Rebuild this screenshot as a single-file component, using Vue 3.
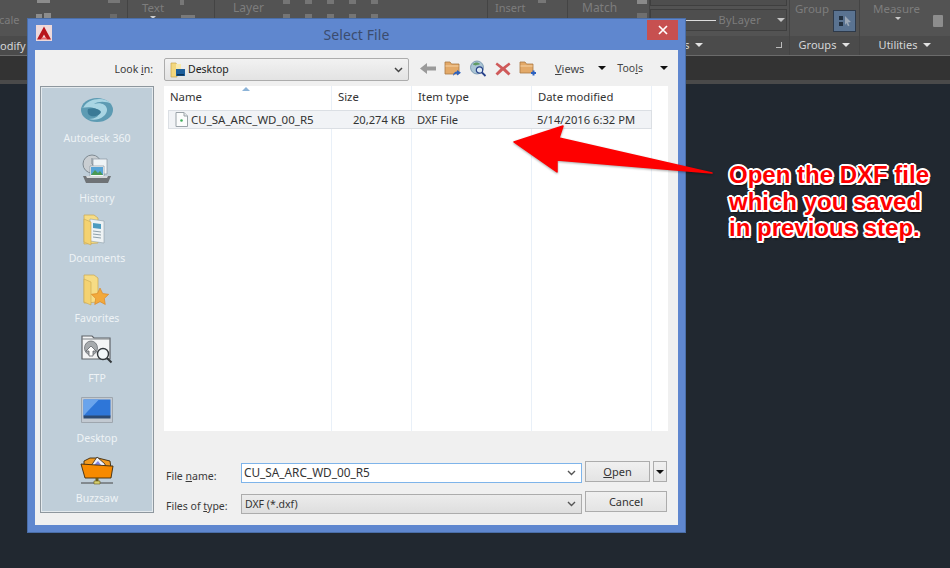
<template>
  <div class="screen">
    <div class="ribbon">
      <div class="panels">
        <div class="panel p-modify">
          <div class="panel-body">
            <span class="dim cale">cale</span>
            <i class="sq sq-a"></i><i class="sq sq-b"></i><i class="sq sq-c"></i>
            <i class="sq sq-d"></i><i class="sq sq-e"></i>
          </div>
          <div class="panel-foot"><span class="foot-left">odify</span></div>
        </div>
        <div class="panel p-text">
          <div class="panel-body">
            <span class="dim">Text</span>
            <i class="sq sq-pen"></i><i class="sq sq-table"></i>
            <i class="tri tri-small tri-text"></i>
          </div>
          <div class="panel-foot"></div>
        </div>
        <div class="panel p-layer">
          <div class="panel-body">
            <span class="dim">Layer</span>
            <div class="mini-row mini-top">
              <i v-for="n in 5" :key="n" class="mini"></i>
            </div>
            <div class="mini-row mini-low">
              <i v-for="n in 5" :key="n" class="mini"></i>
            </div>
          </div>
          <div class="panel-foot"></div>
        </div>
        <div class="panel p-insert">
          <div class="panel-body">
            <span class="dim">Insert</span>
            <i class="sq sq-ins"></i>
          </div>
          <div class="panel-foot"></div>
        </div>
        <div class="panel p-match">
          <div class="panel-body">
            <span class="dim">Match</span>
            <i class="sq sq-m1"></i><i class="sq sq-m2"></i>
          </div>
          <div class="panel-foot"></div>
        </div>
        <div class="panel p-props">
          <div class="panel-body">
            <div class="prop-box prop-top"></div>
            <div class="prop-box prop-bylayer">
              <span class="prop-line"></span>
              <span class="dim">ByLayer</span>
              <i class="tri tri-soft"></i>
            </div>
          </div>
          <div class="panel-foot props-foot">
            <span>es</span><i class="tri"></i>
            <i class="launcher"></i>
          </div>
        </div>
        <div class="panel p-groups">
          <div class="panel-body">
            <span class="dim">Group</span>
            <span class="group-btn">
              <svg width="16" height="16" viewBox="0 0 16 16"><path d="M2 3h4v4H2zM2 9h4v4H2z" fill="#22303f"/><path d="M8 3l6 6-3 .5 1.500 3-1.500 .8L9.500 10 8 12z" fill="#9aa6b5"/></svg>
            </span>
          </div>
          <div class="panel-foot"><span>Groups</span><i class="tri"></i></div>
        </div>
        <div class="panel p-util">
          <div class="panel-body">
            <span class="dim">Measure</span>
            <i class="tri tri-small"></i>
            <i class="calc"></i>
          </div>
          <div class="panel-foot"><span>Utilities</span><i class="tri"></i></div>
        </div>
      </div>
      <div class="tab-strip"></div>
      <div class="tab-edge"></div>
    </div>

    <div class="dialog">
      <div class="titlebar">
        <span class="app-icon">
          <svg width="16" height="16" viewBox="0 0 16 16"><path d="M8 1.500 15 14.500h-4.200L8 9.500 5.200 14.500H1z" fill="#b8141c"/><path d="M5 14.500h6l-1-2H6z" fill="#e8666a"/></svg>
        </span>
        <span class="title">Select File</span>
        <button class="close">
          <svg width="10" height="10" viewBox="0 0 10 10"><path d="M1 1l8 8M9 1l-8 8" stroke="#fff" stroke-width="1.700"/></svg>
        </button>
      </div>

      <div class="dialog-body">
        <label class="look-label">Look <u>i</u>n:</label>
        <div class="look-row">
          <div class="look-combo">
            <svg width="16" height="17" viewBox="0 0 16 17"><path d="M1 2h5l1 2v12H1z" fill="#f3d77e" stroke="#c9a84f" stroke-width=".7"/><path d="M6 3h5v7H6z" fill="#f8e9ae"/><path d="M6 8h9v7H6z" fill="#1d5f9c"/><path d="M7 13h7v1.500H7z" fill="#0f3558"/></svg>
            <span>Desktop</span>
            <svg class="chev" width="9" height="6" viewBox="0 0 9 6"><path d="M1 1l3.500 3.500L8 1" fill="none" stroke="#444" stroke-width="1.500"/></svg>
          </div>
          <div class="tools">
            <svg class="tool" width="18" height="17" viewBox="0 0 18 17"><path d="M1 8.500 8 3v3.500h9v4H8V14z" fill="#9a9a9a"/></svg>
            <svg class="tool" width="18" height="17" viewBox="0 0 18 17"><path d="M1 2h5l1.500 2H15v10H1z" fill="#e3a968" stroke="#a97a45" stroke-width=".8"/><path d="M1.500 6h13" stroke="#f6d3a6"/><path d="M9 16c0-3 2-4.500 4-4.500V10l4 2.800-4 2.700v-1.700c-1.500 0-3 .5-4 2.200z" fill="#2d62c0"/></svg>
            <svg class="tool" width="18" height="17" viewBox="0 0 18 17"><circle cx="8" cy="7.500" r="6.500" fill="#a9c4d4" stroke="#6d8ea8" stroke-width=".8"/><path d="M4 4c2-2 5-2 7 0-1 1-2 .5-3 1S5 6 4 4z" fill="#5f9a63"/><circle cx="10.500" cy="10" r="3.200" fill="#dce9f2" stroke="#28428a" stroke-width="1.200"/><path d="M13 12.500l3.500 3.500" stroke="#28428a" stroke-width="1.800"/></svg>
            <svg class="tool" width="18" height="17" viewBox="0 0 18 17"><path d="M3 2.500 9 7l6-4.500 1.500 2L11.500 8.500l5 5-2 2L9 10.500l-5.500 5-2-2 5-5-5-4z" fill="#cf5a5a"/></svg>
            <svg class="tool" width="18" height="17" viewBox="0 0 18 17"><path d="M1 2h5l1.500 2H14v9H1z" fill="#e3a968" stroke="#a97a45" stroke-width=".8"/><path d="M1.500 6h12" stroke="#f6d3a6"/><path d="M12 13h5M14.500 10.500v5" stroke="#2d62c0" stroke-width="2"/></svg>
            <span class="tool-text views"><u>V</u>iews</span><i class="tri tri-black"></i>
            <span class="tool-text tool-name">Too<u>l</u>s</span><i class="tri tri-black"></i>
          </div>
        </div>

        <nav class="places">
          <div class="place">
            <svg width="34" height="28" viewBox="0 0 34 28"><ellipse cx="17" cy="14" rx="16" ry="12" fill="#5d9bb3"/><path d="M3 12C8 2 24 0 32 8c-6-3-14-3-18 0 6-2 12 0 13 5 1 7-10 13-18 10 6 0 11-3 10-7-2-4-8-6-18-4z" fill="#a9d5e3"/><path d="M8 13c5-2 12 0 13 3-1 3-6 5-10 4-3-1-4-4-3-7z" fill="#3b7a96"/></svg>
            <span>Autodesk 360</span>
          </div>
          <div class="place">
            <svg width="32" height="32" viewBox="0 0 32 32"><circle cx="11" cy="10" r="9" fill="#c9ced2" stroke="#7f8a92"/><path d="M11 4v6l4 3" stroke="#7f8a92" fill="none"/><path d="M12 5h14v15H12z" fill="#eef3f6" stroke="#8b97a0" stroke-width=".7"/><path d="M9 12h14v11H9z" fill="#f7fafb" stroke="#8b97a0" stroke-width=".7"/><path d="M10 13h12v8H10z" fill="#58a4d6"/><path d="M10 21l4-5 3 3 2-2 3 4z" fill="#4b9a54"/><path d="M2 22h28l-3 7H5z" fill="#6f7376"/><path d="M5 22h22l-1 2H6z" fill="#d5d8da"/></svg>
            <span>History</span>
          </div>
          <div class="place shifted">
            <svg width="32" height="34" viewBox="0 0 32 34"><path d="M5 2h10l4 3v25l-14 1z" fill="#f6dc85" stroke="#c9a752" stroke-width=".7"/><path d="M11 6l14 2v22l-14-2z" fill="#eef3f5" stroke="#8ea0aa" stroke-width=".6"/><path d="M14 10l8 1v5l-8-1z" fill="#4d9cc0"/><path d="M14 18l8 1M14 21l8 1M14 24l8 1" stroke="#8ea0aa"/><path d="M5 6l7 3v23l-7-3z" fill="#f4d271" stroke="#c9a752" stroke-width=".6"/></svg>
            <span>Documents</span>
          </div>
          <div class="place shifted">
            <svg width="32" height="34" viewBox="0 0 32 34"><path d="M5 2h10l4 3v24L5 30z" fill="#f6dc85" stroke="#c9a752" stroke-width=".7"/><path d="M5 6l7 3v23l-7-3z" fill="#f4d271" stroke="#c9a752" stroke-width=".6"/><path d="M21 15l2.700 5.500 6 .8-4.400 4.200 1 6-5.300-2.800-5.300 2.800 1-6-4.300-4.200 6-.8z" fill="#f2a93b" stroke="#d97f1d" stroke-width=".6"/></svg>
            <span>Favorites</span>
          </div>
          <div class="place">
            <svg width="32" height="32" viewBox="0 0 32 32"><path d="M1 2h10l2 2h16v21H1z" fill="#f3f4f5" stroke="#5f6368" stroke-width="1.200"/><path d="M1 5h28" stroke="#7f8488"/><ellipse cx="10" cy="14" rx="6.500" ry="7" fill="#a6aaad" stroke="#5f6368" stroke-width=".7"/><path d="M10 12l5 5h-3v5H8v-5H5z" fill="#fff" stroke="#5f6368" stroke-width=".8"/><circle cx="22" cy="20" r="5.500" fill="#f3f7fa" stroke="#33383c" stroke-width="1.400"/><path d="M26 24l4.500 4.500" stroke="#33383c" stroke-width="2"/></svg>
            <span>FTP</span>
          </div>
          <div class="place">
            <svg width="32" height="26" viewBox="0 0 32 26"><path d="M.5.500h31v25H.5z" fill="#c2c9d1" stroke="#9ea6ae"/><path d="M2.500 2.500h27v17h-27z" fill="#2e76d8"/><path d="M2.500 2.500H18L6 15 2.500 19z" fill="#6aa4ec"/><path d="M2.500 18.500h27v3h-27z" fill="#2c4a72"/></svg>
            <span>Desktop</span>
          </div>
          <div class="place">
            <svg width="34" height="32" viewBox="0 0 34 32"><path d="M4 7l6-3 8 0 12 3 1 7H4z" fill="#f39a1e" stroke="#3c2a10" stroke-width=".9"/><path d="M11 12l6-9 8 7v4H11z" fill="#eef0fa" stroke="#3c2a10" stroke-width=".8"/><path d="M14 11l4-4 3 4z" fill="#7f84dd"/><path d="M1 10l30 2 2 0-2 12H5z" fill="#f78a00" stroke="#3c2a10" stroke-width=".9"/><path d="M17 24v3" stroke="#6a5a1a" stroke-width="3"/><path d="M1 29h32" stroke="#444" stroke-width="1"/><path d="M14 27h6v3h-6z" fill="#d6cf6f" stroke="#6a5a1a" stroke-width=".6"/></svg>
            <span>Buzzsaw</span>
          </div>
        </nav>

        <div class="list">
          <div class="list-head">
            <span class="sort-mark"></span>
            <span>Name</span><span>Size</span><span>Item type</span><span>Date modified</span><span></span>
          </div>
          <div class="list-row">
            <span class="file-name">
              <svg width="13" height="15" viewBox="0 0 13 15"><path d="M1 .500h8l3.500 3.500v10.500H1z" fill="#fbfcfc" stroke="#9aa2a8"/><path d="M9 .500V4h3.500" fill="#e4e8ea" stroke="#9aa2a8"/><circle cx="6.500" cy="8.500" r="1.300" fill="#3fae5a"/></svg>
              CU_SA_ARC_WD_00_R5
            </span>
            <span class="file-size">20,274 KB</span>
            <span class="file-type">DXF File</span>
            <span class="file-date">5/14/2016 6:32 PM</span>
          </div>
        </div>

        <div class="form">
          <label class="form-label">File <u>n</u>ame:</label>
          <div class="combo combo-active">
            <span>CU_SA_ARC_WD_00_R5</span>
            <svg width="9" height="6" viewBox="0 0 9 6"><path d="M1 1l3.500 3.500L8 1" fill="none" stroke="#555" stroke-width="1.400"/></svg>
          </div>
          <button class="btn btn-open"><u>O</u>pen</button>
          <button class="btn btn-drop"><i class="tri tri-black"></i></button>

          <label class="form-label">Files of <u>t</u>ype:</label>
          <div class="combo combo-type">
            <span>DXF (*.dxf)</span>
            <svg width="9" height="6" viewBox="0 0 9 6"><path d="M1 1l3.500 3.500L8 1" fill="none" stroke="#555" stroke-width="1.400"/></svg>
          </div>
          <button class="btn btn-cancel">Cancel</button>
        </div>
      </div>
    </div>

    <svg class="arrow" width="950" height="568" viewBox="0 0 950 568">
      <path d="M514 142 563 126 559 138 712 173 557 160 557 172Z" fill="#fe0000" stroke="#fe0000" stroke-width="1.500" stroke-linejoin="round"/>
    </svg>
    <div class="note">Open the DXF file<br>which you saved<br>in previous step.</div>
  </div>
</template>

<script setup>
</script>

<style>
html, body {
  margin: 0;
  background: #212830;
}
</style>

<style scoped>
.screen {
  position: relative;
  width: 950px;
  height: 568px;
  overflow: hidden;
  background: #212830;
  font-family: "Noto Sans", "Open Sans", sans-serif;
  font-size: 11px;
  color: #333;
}

/* ribbon behind the dialog */
.panels {
  display: flex;
  height: 55px;
  background: #535353;
  border-bottom: 1px solid #6b6b6b;
}
.panel {
  display: flex;
  flex-direction: column;
  border-right: 1px solid #444;
  box-sizing: border-box;
}
.panel-body {
  position: relative;
  height: 36px;
  padding: 1px 0 0 14px;
  box-sizing: border-box;
}
.panel-foot {
  display: flex;
  align-items: center;
  justify-content: center;
  gap: 6px;
  height: 19px;
  padding-bottom: 2px;
  box-sizing: border-box;
  background: #4b4b4b;
  color: #d4d6d8;
  font-size: 11px;
}
.dim {
  color: #7d7d7d;
  font-size: 12px;
  line-height: 14px;
}
.p-modify { width: 128px; }
.p-text { width: 87px; }
.p-layer { width: 273px; }
.p-insert { width: 80px; }
.p-match { width: 82px; }
.p-props { width: 140px; }
.p-groups { width: 70px; }
.p-util { width: 90px; border-right: 0; }
.p-text .dim, .p-layer .dim, .p-insert .dim, .p-match .dim { display: block; }
.p-text .dim { font-size: 11.500px; }
.p-layer .panel-body { padding-left: 18px; }
.p-insert .panel-body { padding-left: 7px; }
.p-insert .dim { font-size: 11px; }
.foot-left { margin-right: auto; padding-top: 1px; }
.cale { position: absolute; left: -1px; top: 13px; font-size: 11px; }
.sq { position: absolute; background: #8c8c8c; }
.sq-a { left: 37px; top: 0; width: 13px; height: 3px; }
.sq-b { left: 36px; top: 14px; width: 6px; height: 6px; }
.sq-c { left: 44px; top: 13px; width: 7px; height: 7px; }
.sq-d { left: 108px; top: 0; width: 12px; height: 3px; background: #777; }
.sq-e { left: 110px; top: 14px; width: 7px; height: 6px; background: #6a6a6a; }
.sq-pen { left: 52px; top: 0; width: 4px; height: 5px; background: #777; }
.sq-table { left: 53px; top: 15px; width: 14px; height: 4px; background: #7a7a7a; }
.tri-text { left: 22px !important; top: 16px !important; }
.sq-ins { left: 50px; top: 0; width: 8px; height: 3px; background: #777; }
.sq-m1 { left: 69px; top: 0; width: 10px; height: 4px; background: #8a8a8a; }
.sq-m2 { left: 69px; top: 13px; width: 10px; height: 5px; background: #6f6f6f; }
.mini-row {
  position: absolute;
  left: 68px;
  display: flex;
  gap: 15px;
}
.mini-top { top: 0; }
.mini-low { top: 14px; }
.mini {
  width: 7px;
  height: 4px;
  background: #757575;
}

.prop-box {
  position: absolute;
  left: 0;
  right: 2px;
  box-sizing: border-box;
  border: 1px solid #3f3f3f;
  background: #4e4e4e;
}
.prop-top { top: -6px; height: 12px; }
.prop-bylayer {
  top: 9px;
  height: 22px;
  display: flex;
  align-items: center;
  gap: 3px;
  padding: 0 1px 0 0;
}
.prop-line { flex: 1; height: 1px; background: #dcdcdc; }
.prop-bylayer .dim { font-size: 11px; letter-spacing: .2px; }
.prop-bylayer .tri { margin-left: 13px; }
.props-foot { justify-content: flex-start; padding-left: 28px; position: relative; }
.launcher {
  position: absolute;
  right: 7px;
  top: 6px;
  width: 5px;
  height: 5px;
  border-right: 1px solid #bbb;
  border-bottom: 1px solid #bbb;
}
.p-groups .panel-body { padding-left: 5px; }
.p-groups .dim { font-size: 11.500px; }
.group-btn {
  position: absolute;
  left: 43px;
  top: 10px;
  width: 23px;
  height: 22px;
  box-sizing: border-box;
  border: 1px solid #2e3a4a;
  background: #5a7391;
  display: flex;
  align-items: center;
  justify-content: center;
}
.p-util .panel-body { padding-left: 13px; }
.p-util .dim { font-size: 11.500px; }
.tri-small { position: absolute; left: 35px; top: 17px; }
.calc {
  position: absolute;
  right: 7px;
  top: 15px;
  width: 10px;
  height: 12px;
  background: #8d8d8d;
  border-radius: 1px;
}
.tab-strip {
  height: 24px;
  background: #333;
}
.tab-edge {
  height: 4px;
  background: #4a4a4a;
}

.tri {
  display: inline-block;
  width: 0;
  height: 0;
  border-left: 4px solid transparent;
  border-right: 4px solid transparent;
  border-top: 4px solid #e2e2e2;
}
.tri-soft { border-top-color: #c4c4c4; }
.tri-small { border-left-width: 3px; border-right-width: 3px; border-top: 3px solid #ccc; }
.tri-black { border-top-color: #111; }

/* the file dialog */
.dialog {
  position: absolute;
  left: 28px;
  top: 19px;
  width: 657px;
  height: 513px;
  box-sizing: border-box;
  padding: 0 7px 7px;
  background: #5f87cf;
  box-shadow: 0 0 0 1px #4a6ea8;
  display: flex;
  flex-direction: column;
}
.titlebar {
  position: relative;
  height: 31px;
  flex: none;
  display: flex;
  align-items: center;
  justify-content: center;
}
.app-icon {
  position: absolute;
  left: 1px;
  top: 6px;
  width: 16px;
  height: 16px;
  background: #eed9da;
  display: flex;
}
.title {
  color: #3b4c6e;
  font-size: 14px;
  letter-spacing: .1px;
}
.close {
  position: absolute;
  right: 0;
  top: 1px;
  width: 31px;
  height: 20px;
  padding: 0;
  border: 0;
  background: #c75050;
  display: flex;
  align-items: center;
  justify-content: center;
}

.dialog-body {
  flex: 1;
  display: grid;
  grid-template-columns: 114px 504px;
  grid-template-rows: 23px 345px 1fr;
  column-gap: 10px;
  row-gap: 5px;
  padding: 8px 0 0 5px;
  background: #f0f0f0;
  min-height: 0;
  font-size: 10.500px;
}
.look-label {
  justify-self: end;
  align-self: center;
  padding-right: 1px;
  padding-bottom: 1px;
  color: #3a3a3a;
}
.look-row {
  display: flex;
  align-items: center;
}
.look-combo {
  width: 245px;
  height: 23px;
  box-sizing: border-box;
  flex: none;
  display: flex;
  align-items: center;
  gap: 2px;
  padding: 0 5px;
  background: linear-gradient(#f2f2f2, #e3e3e3);
  border: 1px solid #acacac;
  border-radius: 2px;
  color: #222;
}
.look-combo span { padding-bottom: 1px; }
.look-combo .chev { margin-left: auto; }
.tools {
  display: flex;
  align-items: center;
  margin-left: 10px;
  padding-bottom: 3px;
}
.tool { margin-right: 7px; flex: none; }
.tool-text { color: #444; font-size: 11px; }
.views { margin-left: 11px; margin-right: 14px; }
.tool-name { margin-left: 11px; margin-right: 17px; font-size: 10.500px; }

.places {
  grid-row: 2 / 4;
  height: 427px;
  box-sizing: border-box;
  display: flex;
  flex-direction: column;
  padding-top: 6px;
  background: #bfced9;
  border: 1px solid #8e979e;
  box-shadow: inset 0 0 0 1px #e4eaee;
}
.place {
  height: 60px;
  flex: none;
  position: relative;
  display: flex;
  flex-direction: column;
  align-items: center;
  color: #eef3f6;
}
.place svg { height: 34px; display: block; }
.place.shifted svg { margin-left: -5px; }
.place span {
  position: absolute;
  top: 37px;
  line-height: 16px;
}

.list {
  background-color: #fff;
  background-image:
    linear-gradient(#e9f0f8, #e9f0f8),
    linear-gradient(#e9f0f8, #e9f0f8),
    linear-gradient(#e9f0f8, #e9f0f8),
    linear-gradient(#e9f0f8, #e9f0f8);
  background-repeat: no-repeat;
  background-size: 1px 100%;
  background-position: 167px 0, 247px 0, 367px 0, 487px 0;
}
.list-head, .list-row {
  display: grid;
  grid-template-columns: 168px 80px 120px 120px 16px;
  align-items: center;
}
.list-head {
  position: relative;
  height: 24px;
  padding-bottom: 3px;
  box-sizing: border-box;
  color: #333;
  font-size: 11.300px;
}
.list-head span { padding-left: 6px; }
.sort-mark {
  position: absolute;
  left: 78px;
  top: 1px;
  width: 0;
  height: 0;
  padding: 0 !important;
  border-left: 4px solid transparent;
  border-right: 4px solid transparent;
  border-bottom: 4px solid #8db4d8;
}
.list-row {
  height: 19px;
  margin-left: 4px;
  width: 484px;
  grid-template-columns: 164px 80px 120px 120px;
  box-sizing: border-box;
  padding-bottom: 1px;
  background: #f1f3f6;
  border: 1px solid #dbdfe4;
  color: #333;
  font-size: 11.200px;
}
.file-name {
  display: flex;
  align-items: center;
  gap: 3px;
  padding-left: 6px;
  white-space: nowrap;
  font-size: 11.500px;
}
.file-size { text-align: right; padding-right: 8px; }
.file-type { padding-left: 4px; }
.file-date { padding-left: 4px; }

.form {
  display: grid;
  grid-template-columns: 77px 341px 65px 14px;
  grid-template-rows: 22px 22px;
  column-gap: 0;
  row-gap: 8px;
  align-content: start;
  padding-top: 25px;
}
.form-label {
  padding-left: 2px;
  align-self: center;
  color: #3a3a3a;
  padding-top: 7px;
}
.combo {
  display: flex;
  align-items: center;
  justify-content: space-between;
  box-sizing: border-box;
  height: 20px;
  margin-top: 2px;
  padding: 0 5px 0 2px;
  color: #333;
}
.combo-active {
  background: #fff;
  border: 1px solid #7eb4ea;
  font-size: 11.800px;
}
.combo-active span { padding-bottom: 2px; }
.combo-type {
  background: linear-gradient(#ececec, #dedede);
  border: 1px solid #acacac;
  margin-top: 3px;
  padding-left: 3px;
}
.btn {
  box-sizing: border-box;
  height: 21px;
  padding: 0;
  background: linear-gradient(#f0f0f0, #e4e4e4);
  border: 1px solid #acacac;
  color: #333;
  font: inherit;
  font-size: 11px;
}
.btn-open { margin-left: 3px; width: 65px; }
.btn-drop {
  margin-left: 6px;
  width: 14px;
  display: flex;
  align-items: center;
  justify-content: center;
}
.btn-cancel {
  grid-column: 3 / 5;
  margin-left: 3px;
  width: 82px;
}

/* annotation drawn over the screenshot */
.arrow {
  position: absolute;
  left: 0;
  top: 0;
  pointer-events: none;
  filter: drop-shadow(0 1px 1px rgba(0, 0, 0, .35));
}
.note {
  position: absolute;
  left: 729px;
  top: 162px;
  font-family: "Liberation Sans", Arial, sans-serif;
  font-weight: 700;
  font-size: 24px;
  line-height: 26.500px;
  color: #fe0000;
  white-space: nowrap;
  text-shadow:
    -2px 0 0 #fff, 2px 0 0 #fff, 0 -2px 0 #fff, 0 2px 0 #fff,
    -1.500px -1.500px 0 #fff, 1.500px -1.500px 0 #fff, -1.500px 1.500px 0 #fff, 1.500px 1.500px 0 #fff,
    1px 3px 2px rgba(0, 0, 0, .7);
}
</style>
